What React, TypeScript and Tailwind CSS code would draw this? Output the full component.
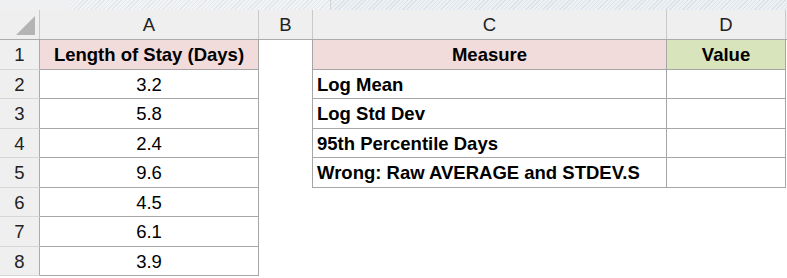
const rowHeights = ['h-[30px]', 'h-[29px]', 'h-[30px]', 'h-[29px]', 'h-[30px]', 'h-[29px]', 'h-[30px]', 'h-[29px]'];

const lengths = ['3.2', '5.8', '2.4', '9.6', '4.5', '6.1', '3.9'];

const measures = ['Log Mean', 'Log Std Dev', '95th Percentile Days', 'Wrong: Raw AVERAGE and STDEV.S'];

const cols = 'grid grid-cols-[40px_219px_54px_354px_119px_1px]';

export default function App() {
  return (
    <div className="w-[787px] h-[278px] overflow-hidden bg-white text-black font-['Liberation_Sans',Arial,sans-serif] text-[18.5px] leading-none">
      {/* ribbon strip above the grid */}
      <div className="h-[10px] flex bg-[#eef0f2]">
        <div className="w-[70px]" />
        <div className="flex-1 bg-[repeating-linear-gradient(135deg,#e3e6ea_0px,#e3e6ea_1px,#f1f3f5_1px,#f1f3f5_3px)]" />
        <div className="w-[1px] bg-[#d0d4d8]" />
        <div className="w-[456px] bg-[repeating-linear-gradient(135deg,#dde2e8_0px,#dde2e8_1px,#eef1f4_1px,#eef1f4_3px)]" />
      </div>

      {/* column headers */}
      <div className={`${cols} h-[30px] bg-[#efefef] border-b border-[#ababab] text-[#222]`}>
        <div className="relative border-r border-[#c9c9c9]">
          <svg className="absolute left-[16px] top-[6px]" width="20" height="20" viewBox="0 0 20 20">
            <polygon points="19,0 19,19 0,19" fill="#b4b4b4" />
          </svg>
        </div>
        {['A', 'B', 'C', 'D'].map((c) => (
          <div key={c} className="flex items-center justify-center border-r border-[#c9c9c9] pt-[2px]">
            {c}
          </div>
        ))}
        <div />
      </div>

      {/* rows */}
      {rowHeights.map((h, i) => {
        const r = i + 1;
        const inRight = r <= 5;
        return (
          <div key={r} className={`${cols} ${h}`}>
            <div className="flex items-center justify-center bg-[#efefef] border-r border-[#ababab] border-b border-b-[#d6d6d6] text-[#222] pt-[2px]">
              {r}
            </div>
            {r === 1 ? (
              <div className="flex items-center justify-center bg-[#f2dcdb] border-r border-b border-[#a6a6a6] font-bold pt-[2px]">
                Length of Stay (Days)
              </div>
            ) : (
              <div className="flex items-center justify-center border-r border-b border-[#a6a6a6] pt-[2px]">
                {lengths[i - 1]}
              </div>
            )}
            <div className={inRight ? 'border-r border-[#a6a6a6]' : ''} />
            {r === 1 ? (
              <>
                <div className="flex items-center justify-center bg-[#f2dcdb] border-r border-b border-[#a6a6a6] font-bold pt-[2px]">
                  Measure
                </div>
                <div className="flex items-center justify-center bg-[#d8e4bc] border-r border-b border-[#a6a6a6] font-bold pt-[2px]">
                  Value
                </div>
              </>
            ) : inRight ? (
              <>
                <div className="flex items-center px-[4px] border-r border-b border-[#a6a6a6] font-bold pt-[2px]">
                  {measures[i - 1]}
                </div>
                <div className="border-r border-b border-[#a6a6a6]" />
              </>
            ) : (
              <>
                <div />
                <div />
              </>
            )}
            <div />
          </div>
        );
      })}
    </div>
  );
}
